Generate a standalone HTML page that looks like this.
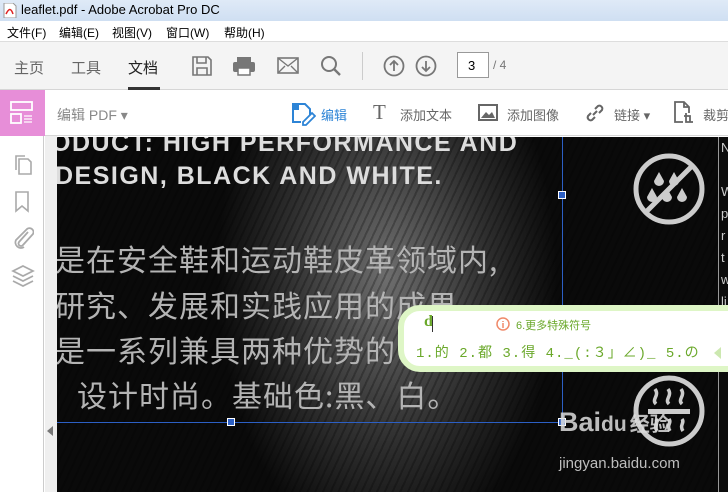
<!DOCTYPE html>
<html><head><meta charset="utf-8"><style>
*{margin:0;padding:0;box-sizing:border-box}
body{width:728px;height:492px;overflow:hidden;position:relative;font-family:"Liberation Sans","Noto Sans CJK SC",sans-serif;background:#fff}
.abs{position:absolute}
#title{left:0;top:0;width:728px;height:21px;background:linear-gradient(#dfeaf7,#cfdff2);font-size:13px;color:#000}
#menu{left:0;top:21px;width:728px;height:21px;background:#fff;font-size:12px;border-bottom:1px solid #ddd}
#tabs{left:0;top:42px;width:728px;height:48px;background:#f4f4f4;border-bottom:1px solid #d6d6d6}
#tb2{left:0;top:90px;width:728px;height:46px;background:#fff;border-bottom:1px solid #d6d6d6;white-space:nowrap}
#left{left:0;top:136px;width:44px;height:356px;background:#fff;border-right:1px solid #ccc}
#strip{left:45px;top:136px;width:12px;height:356px;background:#efefef}
#doc{left:57px;top:137px;width:661px;height:355px;overflow:hidden;
background:radial-gradient(ellipse 170px 280px at 330px 140px,#6e6e6e,#2e2e2e 60%,#0a0a0a 100%);}
.cn{color:#b4b4b4;font-size:30px;letter-spacing:1px;white-space:nowrap;font-family:"Noto Sans CJK SC",sans-serif}
.en{color:#ddd;font-weight:bold;font-size:25px;white-space:nowrap;letter-spacing:1.5px;font-family:"Liberation Sans",sans-serif}
.h{width:8px;height:8px;background:#2c5fc4;border:1px solid #fff}
</style></head><body>
<div id="title" class="abs">
 <svg class="abs" style="left:3px;top:3px" width="14" height="15"><path d="M1 0h9l3 3v12H1z" fill="#fff" stroke="#999"/><path d="M3 11c3-6 5-6 7 0" stroke="#d22" fill="none" stroke-width="1.5"/></svg>
 <span class="abs" style="left:21px;top:2px">leaflet.pdf - Adobe Acrobat Pro DC</span>
</div>
<div id="menu" class="abs">
 <span class="abs" style="left:7px;top:3px">文件(F)</span>
 <span class="abs" style="left:59px;top:3px">编辑(E)</span>
 <span class="abs" style="left:112px;top:3px">视图(V)</span>
 <span class="abs" style="left:166px;top:3px">窗口(W)</span>
 <span class="abs" style="left:224px;top:3px">帮助(H)</span>
</div>
<div id="tabs" class="abs">
 <span class="abs" style="left:14px;top:15px;font-size:15px;color:#666">主页</span>
 <span class="abs" style="left:71px;top:15px;font-size:15px;color:#666">工具</span>
 <span class="abs" style="left:128px;top:15px;font-size:15px;color:#222">文档</span>
 <div class="abs" style="left:128px;top:45px;width:32px;height:3px;background:#333"></div>
 <svg class="abs" style="left:192px;top:14px" width="20" height="20"><path d="M1 1h15l3 3v15H1z M5 1v6h9V1 M5 19v-7h10v7" fill="none" stroke="#777" stroke-width="1.6"/></svg>
 <svg class="abs" style="left:232px;top:14px" width="24" height="20"><rect x="5" y="1" width="14" height="5" fill="#777"/><rect x="1" y="6" width="22" height="10" rx="2" fill="#777"/><rect x="6" y="12" width="12" height="7" fill="#fff" stroke="#777" stroke-width="1.5"/></svg>
 <svg class="abs" style="left:277px;top:15px" width="22" height="17"><rect x="1" y="1" width="20" height="15" fill="none" stroke="#777" stroke-width="1.6"/><path d="M1 1l10 8 10-8M1 16l7-7M21 16l-7-7" fill="none" stroke="#777" stroke-width="1.4"/></svg>
 <svg class="abs" style="left:320px;top:13px" width="22" height="22"><circle cx="9" cy="9" r="7" fill="none" stroke="#777" stroke-width="2"/><path d="M14 14l6 6" stroke="#777" stroke-width="2.4"/></svg>
 <div class="abs" style="left:362px;top:10px;width:1px;height:28px;background:#ccc"></div>
 <svg class="abs" style="left:383px;top:13px" width="22" height="22"><circle cx="11" cy="11" r="9.5" fill="none" stroke="#777" stroke-width="1.8"/><path d="M11 16V6M7 10l4-4 4 4" fill="none" stroke="#777" stroke-width="1.8"/></svg>
 <svg class="abs" style="left:415px;top:13px" width="22" height="22"><circle cx="11" cy="11" r="9.5" fill="none" stroke="#777" stroke-width="1.8"/><path d="M11 6v10M7 12l4 4 4-4" fill="none" stroke="#777" stroke-width="1.8"/></svg>
 <div class="abs" style="left:457px;top:10px;width:32px;height:26px;background:#fff;border:1px solid #999;font-size:13px;padding:5px 0 0 10px">3</div>
 <span class="abs" style="left:493px;top:16px;font-size:12px;color:#777">/ 4</span>
</div>
<div id="tb2" class="abs">
 <div class="abs" style="left:0;top:0;width:45px;height:46px;background:#e78ed8"></div>
 <svg class="abs" style="left:10px;top:11px" width="25" height="24"><rect x="1" y="1" width="21" height="8" fill="none" stroke="#fff" stroke-width="1.8"/><rect x="1" y="13" width="10" height="9" fill="none" stroke="#fff" stroke-width="1.8"/><path d="M14 15h8M14 18h8M14 21h8" stroke="#fff" stroke-width="1.3"/></svg>
 <span class="abs" style="left:57px;top:15px;font-size:14px;color:#888">编辑 PDF ▾</span>
 <svg class="abs" style="left:290px;top:10px" width="26" height="26"><path d="M3 4h12l5 5v6M3 4v18h8" fill="none" stroke="#2d84d6" stroke-width="2"/><rect x="2" y="3" width="7" height="7" fill="#2d84d6"/><path d="M13 22l9-9 3 3-9 9h-3z" fill="none" stroke="#2d84d6" stroke-width="1.8"/></svg>
 <span class="abs" style="left:321px;top:15px;font-size:13px;color:#2d84d6">编辑</span>
 <span class="abs" style="left:373px;top:10px;font-size:21px;color:#666;font-family:'Liberation Serif',serif">T</span>
 <span class="abs" style="left:400px;top:15px;font-size:13px;color:#666">添加文本</span>
 <svg class="abs" style="left:478px;top:14px" width="20" height="18"><rect x="1" y="1" width="18" height="15" fill="none" stroke="#666" stroke-width="2"/><path d="M3 14l5-6 3 3 3-3 3 6z" fill="#666"/></svg>
 <span class="abs" style="left:507px;top:15px;font-size:13px;color:#666">添加图像</span>
 <svg class="abs" style="left:584px;top:12px" width="22" height="22"><path d="M9 13l4-4M7 11l-3 3a3 3 0 004 4l3-3M15 11l3-3a3 3 0 00-4-4l-3 3" fill="none" stroke="#666" stroke-width="2"/></svg>
 <span class="abs" style="left:614px;top:15px;font-size:13px;color:#666">链接 ▾</span>
 <svg class="abs" style="left:674px;top:11px" width="20" height="24"><path d="M9 21H1V1h9l5 5v6M10 1v5h5" fill="none" stroke="#666" stroke-width="1.8"/><path d="M12 12v9h7M10 15h6v6" fill="none" stroke="#666" stroke-width="1.8"/></svg>
 <span class="abs" style="left:703px;top:15px;font-size:13px;color:#666">裁剪</span>
</div>
<div id="left" class="abs">
 <svg class="abs" style="left:13px;top:18px" width="20" height="22"><path d="M6 5h9l3 3v12H6z M3 16V2h9" fill="none" stroke="#aaa" stroke-width="1.6"/></svg>
 <svg class="abs" style="left:15px;top:55px" width="14" height="22"><path d="M1 1h12v19l-6-5-6 5z" fill="none" stroke="#aaa" stroke-width="1.6"/></svg>
 <svg class="abs" style="left:12px;top:90px" width="22" height="24"><path d="M16 6l-9 10a2.5 2.5 0 004 3l10-11a4 4 0 00-6-5L4 14a5.5 5.5 0 008 7" fill="none" stroke="#aaa" stroke-width="1.8"/></svg>
 <svg class="abs" style="left:11px;top:128px" width="24" height="26"><path d="M12 2l10 5-10 5-10-5z M2 12l10 5 10-5 M2 17l10 5 10-5" fill="none" stroke="#aaa" stroke-width="1.7"/></svg>
</div>
<div id="strip" class="abs"><div class="abs" style="left:2px;top:290px;width:0;height:0;border-top:5px solid transparent;border-bottom:5px solid transparent;border-right:6px solid #777"></div></div>
<div id="doc" class="abs">
 <div class="abs" style="left:0;top:0;width:661px;height:355px;background:repeating-linear-gradient(115deg,rgba(0,0,0,0) 0 5px,rgba(0,0,0,.25) 5px 7px)"></div>
 <div class="abs en" style="left:-6px;top:-8px">ODUCT: HIGH PERFORMANCE AND</div>
 <div class="abs en" style="left:-2px;top:25px">DESIGN, BLACK AND WHITE.</div>
 <div class="abs cn" style="left:-2px;top:99px">是在安全鞋和运动鞋皮革领域内,</div>
 <div class="abs cn" style="left:-2px;top:145px">研究、发展和实践应用的成果</div>
 <div class="abs cn" style="left:-2px;top:190px">是一系列兼具两种优势的</div>
 <div class="abs cn" style="left:20px;top:235px">设计时尚。基础色:黑、白。</div>
 <div class="abs" style="left:505px;top:0;width:1px;height:285px;background:#2c5fc4"></div>
 <div class="abs" style="left:0;top:285px;width:505px;height:1px;background:#2c5fc4"></div>
 <div class="abs h" style="left:501px;top:54px"></div>
 <div class="abs h" style="left:170px;top:281px"></div>
 <div class="abs h" style="left:501px;top:281px"></div>
 <svg class="abs" style="left:575px;top:15px" width="74" height="74"><circle cx="37" cy="37" r="33" fill="none" stroke="#ccc" stroke-width="5"/><path d="M14 60L60 14" stroke="#ccc" stroke-width="5"/><g fill="#ccc"><path d="M27 20l5 9a5 5 0 01-10 0z"/><path d="M42 20l5 9a5 5 0 01-10 0z"/><path d="M20 36l5 9a5 5 0 01-10 0z"/><path d="M35 36l5 9a5 5 0 01-10 0z"/><path d="M50 36l5 9a5 5 0 01-10 0z"/></g></svg>
 <svg class="abs" style="left:575px;top:237px" width="74" height="74"><circle cx="37" cy="37" r="33" fill="none" stroke="#ccc" stroke-width="5"/><rect x="16" y="35" width="42" height="5" fill="#ccc"/><path d="M24 30c-5-5 4-8-1-15M37 30c-5-5 4-8-1-15M50 30c-5-5 4-8-1-15M24 45c3 4-3 6 1 12M37 45c3 4-3 6 1 12M50 45c3 4-3 6 1 12" fill="none" stroke="#ccc" stroke-width="3.5"/></svg>
 <div class="abs" style="left:502px;top:270px;color:#ddd;font-size:27px;font-weight:bold;white-space:nowrap;opacity:.85">Bai<span style="font-size:21px">du</span><span style="font-family:'Noto Sans CJK SC';font-size:20px;margin-left:3px">经验</span></div>
 <div class="abs" style="left:502px;top:318px;color:#ddd;font-size:15px;white-space:nowrap;opacity:.85">jingyan.baidu.com</div>
</div>
<div class="abs" style="left:718px;top:137px;width:10px;height:355px;background:#0c0c0c;border-left:1px solid #999;color:#ccc;font-size:13px;line-height:22px;padding-left:2px;overflow:hidden">N<br><br>W<br>p<br>r<br>t<br>w<br>li</div>
<div class="abs" style="left:398px;top:305px;width:340px;height:67px;background:#fff;border:6px solid #def6c6;border-radius:22px 0 0 22px"></div>
<span class="abs" style="left:424px;top:313px;font-size:16px;color:#6aa82a;font-weight:bold;font-family:'Liberation Serif',serif">d</span>
<div class="abs" style="left:432px;top:316px;width:1px;height:16px;background:#333"></div>
<svg class="abs" style="left:496px;top:317px" width="14" height="14"><circle cx="7" cy="7" r="6" fill="none" stroke="#f08a6a" stroke-width="1.5"/><path d="M7 4v1M7 6v5" stroke="#f08a6a" stroke-width="1.5"/></svg>
<span class="abs" style="left:516px;top:317px;font-size:11px;color:#6aa82a">6.更多特殊符号</span>
<span class="abs" style="left:416px;top:342px;font-size:14px;color:#6aa82a;white-space:nowrap;letter-spacing:1px;font-family:'Liberation Mono','Noto Sans CJK SC',monospace">1.的 2.都 3.得 4._(:３」∠)_ 5.の</span>
<div class="abs" style="left:714px;top:347px;width:0;height:0;border-top:6px solid transparent;border-bottom:6px solid transparent;border-right:7px solid #cce8b0"></div>
</body></html>
